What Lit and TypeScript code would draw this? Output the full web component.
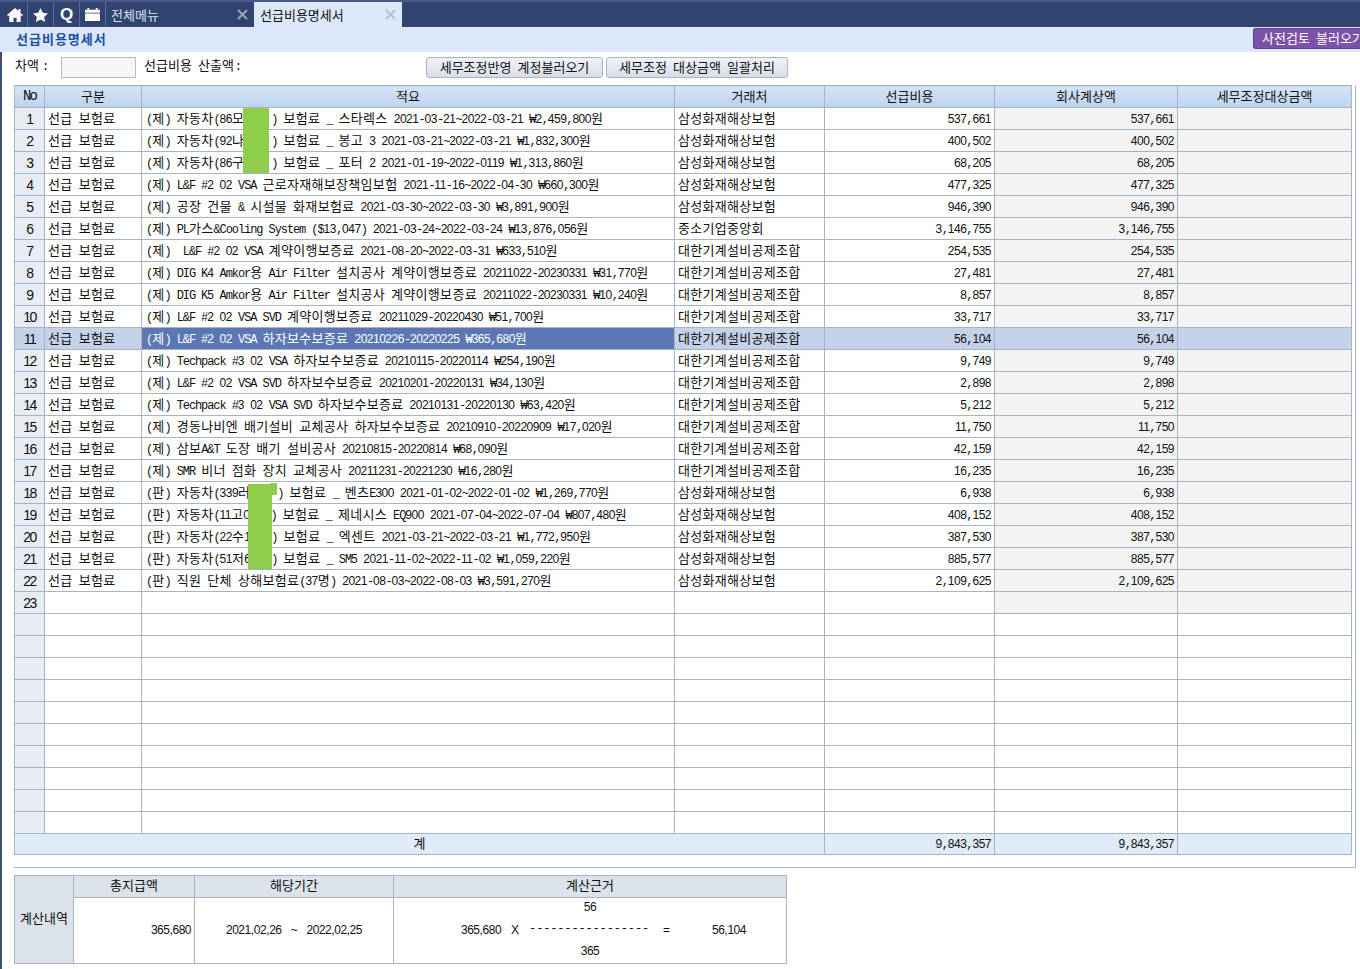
import { LitElement, css, html } from 'lit'
import { customElement } from 'lit/decorators.js'

// hangul, digits and latin run at different sizes, the source UI font is 12px hangul / 6px latin.
// {n} in a string leaves n px free (the masked part of a plate number, tight label colons)
const mixed = (text: string) =>
  (text.match(/\{\d+\}|[가-힣]+|[0-9]+|[^가-힣0-9{]+/g) ?? []).map((part) => {
    if (part.startsWith('{')) return html`<span class="gap" style="width:${part.slice(1, -1)}px"></span>`
    if (/[가-힣]/.test(part)) return html`<span class="ko">${part}</span>`
    if (/[0-9]/.test(part)) return html`<span class="dg">${part}</span>`
    return html`<span class="la">${part}</span>`
  })

const SAMSUNG = '삼성화재해상보험'
const MACHINERY = '대한기계설비공제조합'

const rows: [string, string, string][] = [
  ['(제) 자동차(86모{27}) 보험료 _ 스타렉스 2021-03-21~2022-03-21 ₩2,459,800원', SAMSUNG, '537,661'],
  ['(제) 자동차(92나{27}) 보험료 _ 봉고 3 2021-03-21~2022-03-21 ₩1,832,300원', SAMSUNG, '400,502'],
  ['(제) 자동차(86구{27}) 보험료 _ 포터 2 2021-01-19~2022-0119 ₩1,313,860원', SAMSUNG, '68,205'],
  ['(제) L&F #2 02 VSA 근로자재해보장책임보험 2021-11-16~2022-04-30 ₩660,300원', SAMSUNG, '477,325'],
  ['(제) 공장 건물 & 시설물 화재보험료 2021-03-30~2022-03-30 ₩3,891,900원', SAMSUNG, '946,390'],
  ['(제) PL가스&Cooling System ($13,047) 2021-03-24~2022-03-24 ₩13,876,056원', '중소기업중앙회', '3,146,755'],
  ['(제)  L&F #2 02 VSA 계약이행보증료 2021-08-20~2022-03-31 ₩633,510원', MACHINERY, '254,535'],
  ['(제) DIG K4 Amkor용 Air Filter 설치공사 계약이행보증료 20211022-20230331 ₩31,770원', MACHINERY, '27,481'],
  ['(제) DIG K5 Amkor용 Air Filter 설치공사 계약이행보증료 20211022-20230331 ₩10,240원', MACHINERY, '8,857'],
  ['(제) L&F #2 02 VSA SVD 계약이행보증료 20211029-20220430 ₩51,700원', MACHINERY, '33,717'],
  ['(제) L&F #2 02 VSA 하자보수보증료 20210226-20220225 ₩365,680원', MACHINERY, '56,104'],
  ['(제) Techpack #3 02 VSA 하자보수보증료 20210115-20220114 ₩254,190원', MACHINERY, '9,749'],
  ['(제) L&F #2 02 VSA SVD 하자보수보증료 20210201-20220131 ₩34,130원', MACHINERY, '2,898'],
  ['(제) Techpack #3 02 VSA SVD 하자보수보증료 20210131-20220130 ₩63,420원', MACHINERY, '5,212'],
  ['(제) 경동나비엔 배기설비 교체공사 하자보수보증료 20210910-20220909 ₩17,020원', MACHINERY, '11,750'],
  ['(제) 삼보A&T 도장 배기 설비공사 20210815-20220814 ₩68,090원', MACHINERY, '42,159'],
  ['(제) SMR 비너 점화 장치 교체공사 20211231-20221230 ₩16,280원', MACHINERY, '16,235'],
  ['(판) 자동차(339러{27}) 보험료 _ 벤츠E300 2021-01-02~2022-01-02 ₩1,269,770원', SAMSUNG, '6,938'],
  ['(판) 자동차(11고0{21}) 보험료 _ 제네시스 EQ900 2021-07-04~2022-07-04 ₩807,480원', SAMSUNG, '408,152'],
  ['(판) 자동차(22수1{21}) 보험료 _ 엑센트 2021-03-21~2022-03-21 ₩1,772,950원', SAMSUNG, '387,530'],
  ['(판) 자동차(51저6{21}) 보험료 _ SM5 2021-11-02~2022-11-02 ₩1,059,220원', SAMSUNG, '885,577'],
  ['(판) 직원 단체 상해보험료(37명) 2021-08-03~2022-08-03 ₩3,591,270원', SAMSUNG, '2,109,625'],
]

@customElement('app-root')
export class AppRoot extends LitElement {
  static styles = css`
    :host {
      display: block;
      position: relative;
      width: 1360px;
      height: 969px;
      overflow: hidden;
      background: #fff;
      color: #111;
      font-family: "Noto Sans CJK KR", "Liberation Sans", sans-serif;
      font-size: 13px;
      line-height: 14px;
    }
    .ko, .la, .dg { white-space: pre; }
    .ko { font-family: "Noto Sans CJK KR", sans-serif; font-size: 13px; }
    td .ko { letter-spacing: 0.3px; }
    .la { font-family: "Liberation Mono", monospace; font-size: 12px; letter-spacing: -1.08px; }
    .dg { font-family: "Liberation Sans", sans-serif; font-size: 12px; letter-spacing: -0.5px; }
    .tight .la { font-family: "Liberation Sans", sans-serif; letter-spacing: -0.3px; }
    .gap { display: inline-block; height: 1px; }

    .topbar {
      display: flex;
      height: 25px;
      background: #30446f;
      border-top: 2px solid #47598c;
    }
    .tool {
      flex: none;
      width: 26px;
      box-sizing: border-box;
      border-right: 1px solid #5c6f9a;
      display: flex;
      align-items: center;
      justify-content: center;
      color: #fff;
      font: bold 17px "Liberation Sans", sans-serif;
    }
    .tool.first { width: 28px; padding-left: 2px; }
    .tab {
      display: flex;
      align-items: center;
      justify-content: space-between;
      width: 148px;
      padding: 0 6px 0 5px;
      box-sizing: border-box;
      color: #d8e0ee;
    }
    .tab.on { background: #dce9fa; color: #111; padding-left: 6px; }
    .tab svg { flex: none; }

    .frame { border-left: 2px solid #3e4c7a; height: 942px; box-sizing: border-box; }
    .title {
      display: flex;
      justify-content: space-between;
      align-items: center;
      height: 25px;
      margin-left: -2px;
      padding-left: 16px;
      background: #dce8fa;
      box-sizing: border-box;
    }
    .title b { color: #1b4fa3; font-weight: 700; font-size: 13px; letter-spacing: 1px; padding-bottom: 2px; }
    .btn-purple {
      width: 107px;
      height: 21px;
      margin-top: -3px;
      box-sizing: border-box;
      flex: none;
      white-space: nowrap;
      overflow: hidden;
      padding-left: 8px;
      border: 1px solid #5b3f92;
      border-right: 0;
      border-radius: 3px 0 0 3px;
      background: #7a52a8;
      color: #fff;
      line-height: 18px;
    }

    .toolbar {
      display: flex;
      align-items: center;
      height: 33px;
      padding: 0 0 2px 13px;
      box-sizing: border-box;
    }
    .toolbar .lbl { flex: none; padding-bottom: 3px; }
    .lbl.diff { width: 46px; }
    .lbl.calc-sum { width: 282px; margin-left: 8px; }
    .field {
      flex: none;
      width: 75px;
      height: 21px;
      box-sizing: border-box;
      border: 1px solid #bdbdbd;
      background: #f6f6f6;
    }
    .btn {
      flex: none;
      height: 21px;
      box-sizing: border-box;
      border: 1px solid #a9b4cc;
      border-radius: 3px;
      background: linear-gradient(#f0f3f8, #d8dde8);
      text-align: center;
      line-height: 18px;
    }
    .btn.a { width: 177px; }
    .btn.b { width: 182px; margin-left: 3px; }

    .box {
      width: 1342px;
      margin-left: 12px;
      box-sizing: border-box;
      border-right: 1px solid #aab3c6;
      border-bottom: 1px solid #aab3c6;
      padding-bottom: 12px;
    }
    table { border-collapse: collapse; table-layout: fixed; }
    td, th {
      border: 1px solid #aab3c6;
      padding: 0;
      height: 22px;
      box-sizing: border-box;
      line-height: 14px;
      white-space: nowrap;
      overflow: hidden;
      font-weight: 400;
    }
    .grid { width: 1337px; }
    .grid th { background: linear-gradient(#d6e4f6, #bcd3ef); text-align: center; padding-bottom: 2px; }
    .grid td.no { background: #e8ecf4; text-align: center; }
    .grid td.no .dg { font-size: 14px; letter-spacing: -1.5px; }
    .grid th .la { font-size: 14px; letter-spacing: -2px; }
    .grid td.txt { padding-left: 3px; }
    .grid td.vendor { padding: 0 0 2px 3px; }
    .grid td.desc { padding-left: 4px; }
    .grid td.num { text-align: right; padding-right: 3px; }
    .grid td.gray { background: #f3f3f3; }
    .grid tr.sel td { background: #c3d2e8; }
    .grid tr.sel td.desc { background: #5b78b5; color: #fff; }
    .grid tr.sum td { background: #e1ecfa; height: 21px; text-align: center; }
    .grid tr.sum td.label { padding-bottom: 2px; }
    .grid tr.sum td.num { text-align: right; }

    .calc { width: 772px; margin: 7px 0 0 12px; }
    .calc th { background: #dbe2ea; text-align: center; padding-bottom: 4px; }
    .calc .body td { height: 66px; text-align: center; padding-bottom: 2px; }
    .calc .body td.amt { text-align: right; padding-right: 3px; }
    .calc .body td.basis { vertical-align: top; padding: 1px 0 0; }
    .formula { display: flex; flex-direction: column; height: 60px; justify-content: space-between; align-items: center; }
    .formula .line { height: 16px; display: flex; align-items: center; }
    .formula .mid { display: flex; align-items: center; height: 22px; width: 100%; box-sizing: border-box; padding-left: 67px; }
    .formula .mid > span { flex: none; }
    .formula .x { width: 18px; margin-left: 10px; text-align: left; }
    .formula .dash { font-family: "Liberation Mono", monospace; font-size: 12px; letter-spacing: -0.15px; }
    .formula .eq { width: 6px; margin-left: 14px; }
    .formula .res { margin-left: 43px; }

    /* masking blocks painted over the plate numbers */
    .mask { position: absolute; background: #8ece4c; }
  `

  render() {
    const empties = Array.from({ length: 10 })
    return html`
      <div class="topbar">
        <div class="tool first">
          <svg width="16" height="14" viewBox="0 0 17 15"><path fill="#fff" d="M8.5 0 0 7.6l1 1.2 1.4-1.2V15h4.4v-4.6h3.4V15h4.4V7.6L16 8.8l1-1.2-2.6-2.3V1h-2.2v2.3z"/></svg>
        </div>
        <div class="tool">
          <svg width="15" height="14" viewBox="0 0 16 15"><path fill="#fff" d="m8 0 2.4 5.2 5.6.6-4.2 3.8 1.2 5.4L8 12.2 3 15l1.2-5.4L0 5.8l5.6-.6z"/></svg>
        </div>
        <div class="tool">Q</div>
        <div class="tool">
          <svg width="15" height="13" viewBox="0 0 16 14"><path fill="#fff" d="M0 2h2.5V0h2v2h7V0h2v2H16v3H0zM0 6h16v8H0z"/></svg>
        </div>
        <div class="tab">
          <span>${mixed('전체메뉴')}</span>
          <svg width="11" height="11" viewBox="0 0 11 11"><path stroke="#9aa6bd" stroke-width="2" d="m1 1 9 9M10 1l-9 9"/></svg>
        </div>
        <div class="tab on">
          <span>${mixed('선급비용명세서')}</span>
          <svg width="11" height="11" viewBox="0 0 11 11"><path stroke="#b4bfce" stroke-width="2" d="m1 1 9 9M10 1l-9 9"/></svg>
        </div>
      </div>
      <div class="frame">
        <div class="title">
          <b>선급비용명세서</b>
          <div class="btn-purple">${mixed('사전검토 불러오기')}</div>
        </div>
        <div class="toolbar">
          <span class="lbl diff">${mixed('차액{3}:')}</span>
          <div class="field"></div>
          <span class="lbl calc-sum">${mixed('선급비용 산출액{1}:')}</span>
          <div class="btn a">${mixed('세무조정반영 계정불러오기')}</div>
          <div class="btn b">${mixed('세무조정 대상금액 일괄처리')}</div>
        </div>
        <div class="box">
          <table class="grid">
            <colgroup>
              <col style="width:30px" /><col style="width:97px" /><col style="width:533px" /><col style="width:150px" />
              <col style="width:170px" /><col style="width:183px" /><col style="width:174px" />
            </colgroup>
            <tr>
              <th>${mixed('No')}</th><th>구분</th><th>적요</th><th>거래처</th>
              <th>선급비용</th><th>회사계상액</th><th>세무조정대상금액</th>
            </tr>
            ${rows.map(([desc, vendor, amount], i) => html`
              <tr class=${i === 10 ? 'sel' : ''}>
                <td class="no">${mixed(String(i + 1))}</td>
                <td class="txt">${mixed('선급 보험료')}</td>
                <td class="desc">${mixed(desc)}</td>
                <td class="vendor">${mixed(vendor)}</td>
                <td class="num">${mixed(amount)}</td>
                <td class="num gray">${mixed(amount)}</td>
                <td class="gray"></td>
              </tr>
            `)}
            <tr>
              <td class="no">${mixed('23')}</td><td></td><td></td><td></td><td></td>
              <td class="gray"></td><td class="gray"></td>
            </tr>
            ${empties.map(() => html`
              <tr><td class="no"></td><td></td><td></td><td></td><td></td><td></td><td></td></tr>
            `)}
            <tr class="sum">
              <td class="label" colspan="4">계</td>
              <td class="num">${mixed('9,843,357')}</td>
              <td class="num">${mixed('9,843,357')}</td>
              <td></td>
            </tr>
          </table>
        </div>
        <table class="calc tight">
          <colgroup>
            <col style="width:59px" /><col style="width:121px" /><col style="width:199px" /><col style="width:393px" />
          </colgroup>
          <tr>
            <th rowspan="2">계산내역</th><th>총지급액</th><th>해당기간</th><th>계산근거</th>
          </tr>
          <tr class="body">
            <td class="amt">${mixed('365,680')}</td>
            <td>${mixed('2021,02,26   ~   2022,02,25')}</td>
            <td class="basis">
              <div class="formula">
                <div class="line">${mixed('56')}</div>
                <div class="mid">
                  <span>${mixed('365,680')}</span>
                  <span class="x">${mixed('X')}</span>
                  <span class="dash">-----------------</span>
                  <span class="eq">${mixed('=')}</span>
                  <span class="res">${mixed('56,104')}</span>
                </div>
                <div class="line">${mixed('365')}</div>
              </div>
            </td>
          </tr>
        </table>
      </div>
      <div class="mask" style="left:243px;top:108px;width:26px;height:65px"></div>
      <div class="mask" style="left:248px;top:484px;width:24px;height:85px"></div>
      <div class="mask" style="left:270px;top:483px;width:7px;height:12px"></div>
    `
  }
}
